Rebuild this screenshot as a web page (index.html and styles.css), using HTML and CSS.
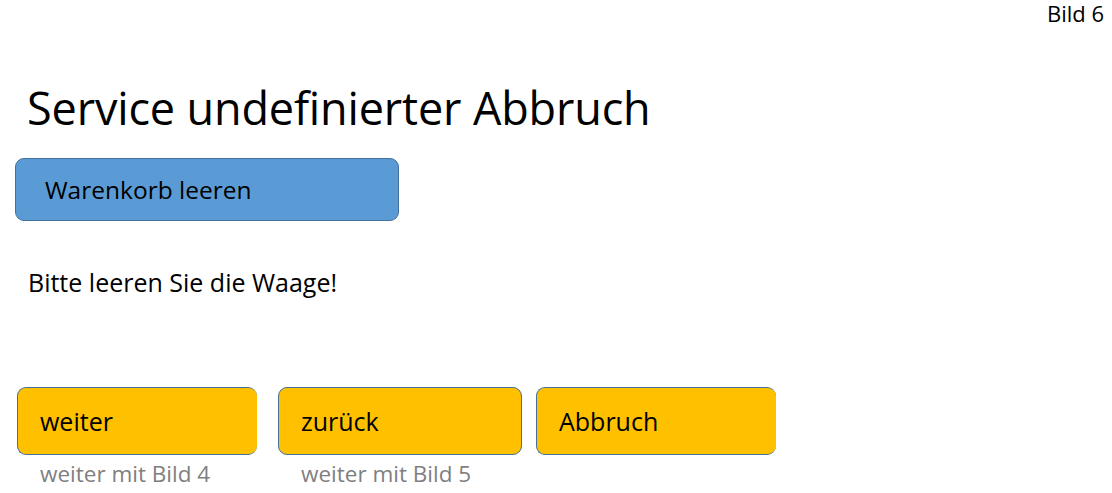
FILE: index.html
```html
<!DOCTYPE html>
<html lang="de">
<head>
<meta charset="utf-8">
<title>Bild 6</title>
<link rel="stylesheet" href="styles.css">
</head>
<body>
<div class="page">
  <div class="slide-no">Bild 6</div>
  <h1 class="title">Service undefinierter Abbruch</h1>
  <div class="btn btn-blue">Warenkorb leeren</div>
  <p class="msg">Bitte leeren Sie die Waage!</p>
  <div class="actions">
    <div class="action">
      <div class="btn btn-yellow w1 cut">weiter</div>
      <div class="hint">weiter mit Bild 4</div>
    </div>
    <div class="action">
      <div class="btn btn-yellow w2">zurück</div>
      <div class="hint">weiter mit Bild 5</div>
    </div>
    <div class="action">
      <div class="btn btn-yellow w3 cut">Abbruch</div>
    </div>
  </div>
</div>
</body>
</html>
```
FILE: styles.css
```css
html, body {
  margin: 0;
  padding: 0;
  background: #ffffff;
}
.page {
  width: 1112px;
  height: 493px;
  box-sizing: border-box;
  padding: 0 0 0 15px;
  font-family: "Open Sans", "Liberation Sans", sans-serif;
  color: #000;
  display: flex;
  flex-direction: column;
  align-items: flex-start;
}
.slide-no {
  align-self: flex-end;
  margin: 0 8px 0 0;
  font-size: 22px;
  line-height: 26px;
}
.title {
  margin: 54px 0 0 12px;
  font-weight: 400;
  font-size: 45px;
  line-height: 56px;
  letter-spacing: -0.15px;
}
.btn {
  box-sizing: border-box;
  border: 1px solid #41719c;
  border-radius: 9px;
  display: flex;
  align-items: center;
}
.btn-blue {
  margin-top: 22px;
  width: 384px;
  height: 63px;
  background: #5b9bd5;
  padding: 0 0 0 29px;
  font-size: 24.5px;
}
.msg {
  margin: 46px 0 0 13px;
  font-size: 25px;
  line-height: 30px;
}
.actions {
  margin-top: 90px;
  display: flex;
  padding-left: 2px;
}
.action {
  display: flex;
  flex-direction: column;
}
.btn-yellow {
  height: 68px;
  background: #ffc000;
  padding: 0 0 0 22px;
  font-size: 25px;
}
.cut {
  border-right: none;
}
.w1 { width: 240px; margin-right: 21px; }
.w2 { width: 244px; margin-right: 14px; }
.w3 { width: 240px; }
.hint {
  margin: 4px 0 0 23px;
  color: #7f7f7f;
  font-size: 22.5px;
  line-height: 30px;
}
```
